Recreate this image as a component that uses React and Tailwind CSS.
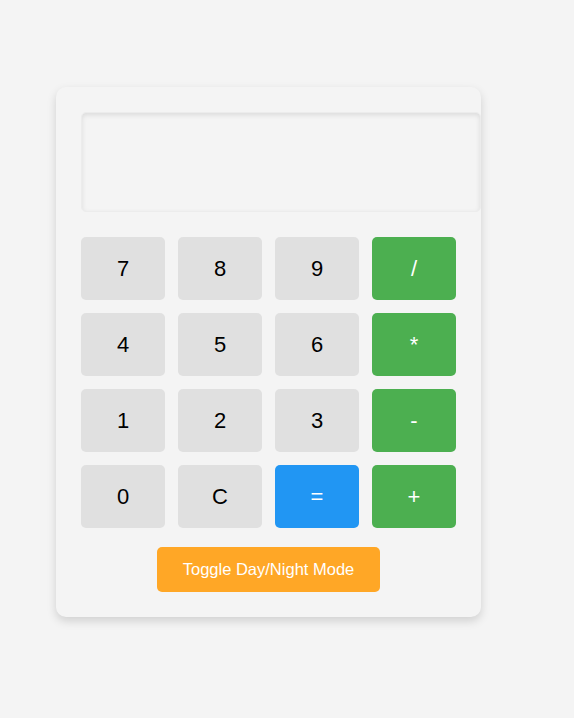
export default function App() {
  const keys = [
    ["7", "n"], ["8", "n"], ["9", "n"], ["/", "g"],
    ["4", "n"], ["5", "n"], ["6", "n"], ["*", "g"],
    ["1", "n"], ["2", "n"], ["3", "n"], ["-", "g"],
    ["0", "n"], ["C", "n"], ["=", "b"], ["+", "g"],
  ];
  const cls = {
    n: "bg-[#e0e0e0] text-black",
    g: "bg-[#4caf50] text-white",
    b: "bg-[#2196f3] text-white",
  };
  return (
    <div className="min-h-[718px] bg-[#f4f4f4] pt-[87px] pl-[56px] font-['Liberation_Sans',Arial,sans-serif]">
      <div className="w-[425px] rounded-[10px] bg-[#f4f4f4] p-[25px] shadow-[0_4px_10px_rgba(0,0,0,0.15)]">
        <div className="h-[100px] w-[400px] rounded-[5px] bg-[#f4f4f4] shadow-[inset_0_2px_5px_rgba(0,0,0,0.1)] border border-[#ececec]"></div>
        <div className="mt-[25px] grid grid-cols-[repeat(4,84px)] gap-[13px]">
          {keys.map(([k, t]) => (
            <button
              key={k}
              className={`h-[63px] rounded-[5px] text-[22px] flex items-center justify-center ${cls[t]}`}
            >
              {k}
            </button>
          ))}
        </div>
        <div className="mt-[19px] flex justify-center">
          <button className="h-[45px] w-[223px] rounded-[5px] bg-[#ffa726] text-[16.5px] text-white">
            Toggle Day/Night Mode
          </button>
        </div>
      </div>
    </div>
  );
}
